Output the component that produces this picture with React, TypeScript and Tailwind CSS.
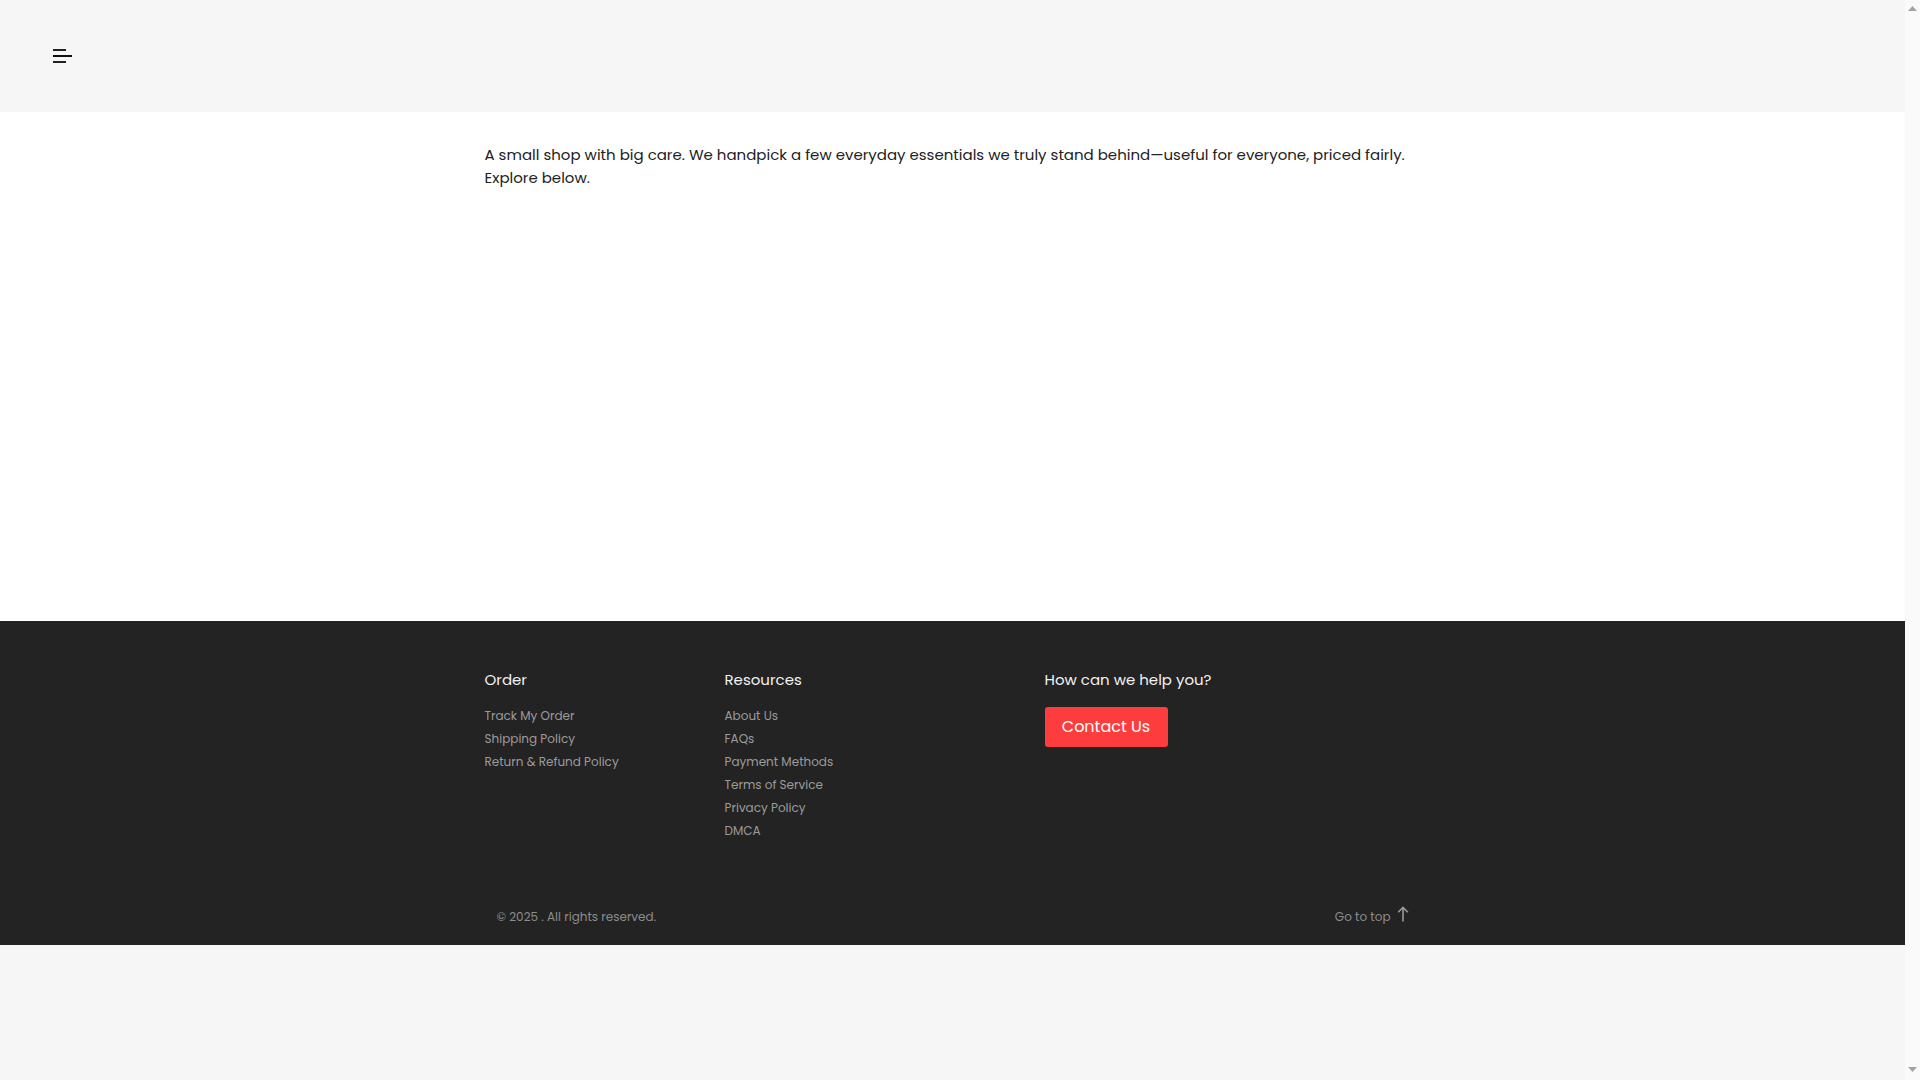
import React from "react";

const orderLinks = ["Track My Order", "Shipping Policy", "Return & Refund Policy"];
const resourceLinks = [
  "About Us",
  "FAQs",
  "Payment Methods",
  "Terms of Service",
  "Privacy Policy",
  "DMCA",
];

function MenuIcon() {
  return (
    <svg width="20" height="16" viewBox="0 0 20 16" fill="none" aria-hidden="true">
      <rect x="0" y="1" width="13" height="2" fill="#222" />
      <rect x="0" y="7" width="19" height="2" fill="#111" />
      <rect x="0" y="13" width="13" height="2" fill="#222" />
    </svg>
  );
}

function ArrowUp() {
  return (
    <svg width="12" height="16" viewBox="0 0 12 16" fill="none" aria-hidden="true">
      <path d="M6 15.5V1.5M1.2 6.3L6 1.5L10.8 6.3" stroke="#9a9a9a" strokeWidth="1.6" />
    </svg>
  );
}

// Window scrollbar strip on the right edge
function ScrollStrip() {
  return (
    <div className="w-[15px] shrink-0 bg-[#fafafa] flex flex-col justify-between items-center pt-[6px] pb-[8px]">
      <svg width="9" height="5" viewBox="0 0 9 5" aria-hidden="true">
        <path d="M0 5L4.5 0L9 5Z" fill="#a3a3a3" />
      </svg>
      <svg width="9" height="5" viewBox="0 0 9 5" aria-hidden="true">
        <path d="M0 0L4.5 5L9 0Z" fill="#a3a3a3" />
      </svg>
    </div>
  );
}

export default function App() {
  return (
    <div
      className="h-screen flex overflow-hidden bg-[#f6f6f6] text-[#222]"
      style={{ fontFamily: "Poppins, 'Open Sans', 'Noto Sans', sans-serif" }}
    >
      <div className="flex-1 min-w-0">
        <header className="h-[112px] bg-[#f6f6f6] flex items-center pl-[53px]">
          <button className="flex items-center">
            <MenuIcon />
          </button>
        </header>

        <main className="h-[509px] bg-white">
          <div className="w-[960px] mx-auto px-3 pt-[31px]">
            <p className="text-[15px] leading-[23px] text-[#222]">
              A small shop with big care. We handpick a few everyday essentials we truly stand
              behind—useful for everyone, priced fairly. Explore below.
            </p>
          </div>
        </main>

        <footer className="bg-[#232323] h-[324px]">
          <div className="w-[960px] mx-auto pt-[47px]">
            <div className="flex h-[240px]">
              <div className="w-[240px] px-3">
                <h4 className="text-[15px] leading-[24px] text-[#f2f2f2] mb-3">Order</h4>
                <ul className="flex flex-col">
                  {orderLinks.map((l) => (
                    <li key={l} className="text-[12px] leading-[23px] text-[#9b9b9b]">
                      {l}
                    </li>
                  ))}
                </ul>
              </div>
              <div className="w-[320px] px-3">
                <h4 className="text-[15px] leading-[24px] text-[#f2f2f2] mb-3">Resources</h4>
                <ul className="flex flex-col">
                  {resourceLinks.map((l) => (
                    <li key={l} className="text-[12px] leading-[23px] text-[#9b9b9b]">
                      {l}
                    </li>
                  ))}
                </ul>
              </div>
              <div className="flex-1 px-3">
                <h4 className="text-[15px] leading-[24px] text-[#f2f2f2] mb-[15px]">
                  How can we help you?
                </h4>
                <button className="h-[40px] w-[123px] rounded-[3px] bg-[#fd3d3d] text-white text-[16px]">
                  Contact Us
                </button>
              </div>
            </div>
            <div className="flex items-center justify-between px-6 text-[12px] leading-[18px] text-[#8c8c8c]">
              <span>© 2025 . All rights reserved.</span>
              <span className="flex items-center gap-[6px]">
                Go to top
                <span className="-mt-[6px]">
                  <ArrowUp />
                </span>
              </span>
            </div>
          </div>
        </footer>
      </div>
      <ScrollStrip />
    </div>
  );
}
